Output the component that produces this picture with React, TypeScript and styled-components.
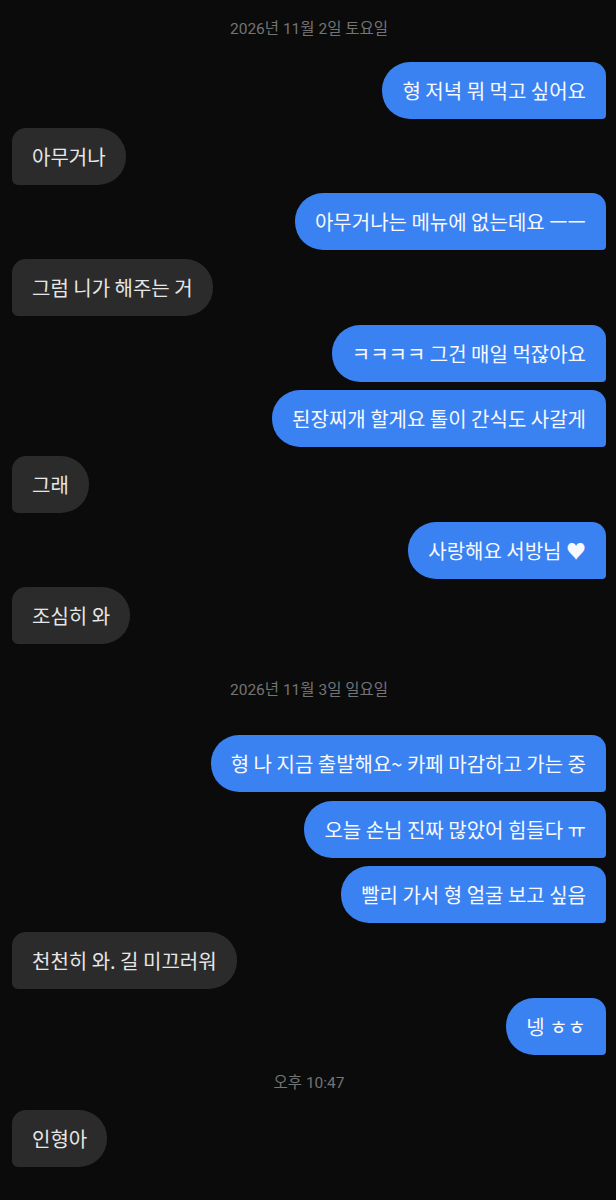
import React from 'react'
import styled, { createGlobalStyle } from 'styled-components'

type Side = 'me' | 'them'

type Item =
	| { kind: 'divider'; text: string; top: number; bottom: number }
	| { kind: 'msg'; side: Side; text: string }

const items: Item[] = [
	{ kind: 'divider', text: '2026년 11월 2일 토요일', top: 19, bottom: 14.3 },
	{ kind: 'msg', side: 'me', text: '형 저녁 뭐 먹고 싶어요' },
	{ kind: 'msg', side: 'them', text: '아무거나' },
	{ kind: 'msg', side: 'me', text: '아무거나는 메뉴에 없는데요 ㅡㅡ' },
	{ kind: 'msg', side: 'them', text: '그럼 니가 해주는 거' },
	{ kind: 'msg', side: 'me', text: 'ㅋㅋㅋㅋ 그건 매일 먹잖아요' },
	{ kind: 'msg', side: 'me', text: '된장찌개 할게요 톨이 간식도 사갈게' },
	{ kind: 'msg', side: 'them', text: '그래' },
	{ kind: 'msg', side: 'me', text: '사랑해요 서방님 ♥' },
	{ kind: 'msg', side: 'them', text: '조심히 와' },
	{ kind: 'divider', text: '2026년 11월 3일 일요일', top: 27, bottom: 26 },
	{ kind: 'msg', side: 'me', text: '형 나 지금 출발해요~ 카페 마감하고 가는 중' },
	{ kind: 'msg', side: 'me', text: '오늘 손님 진짜 많았어 힘들다 ㅠ' },
	{ kind: 'msg', side: 'me', text: '빨리 가서 형 얼굴 보고 싶음' },
	{ kind: 'msg', side: 'them', text: '천천히 와. 길 미끄러워' },
	{ kind: 'msg', side: 'me', text: '넹 ㅎㅎ' },
	{ kind: 'divider', text: '오후 10:47', top: 10, bottom: 8 },
	{ kind: 'msg', side: 'them', text: '인형아' },
]

const GlobalStyle = createGlobalStyle`
	html, body {
		margin: 0;
		padding: 0;
		background: #0b0b0b;
	}
	body {
		font-family: Roboto, "Noto Sans CJK KR", sans-serif;
	}
`

const Screen = styled.div`
	width: 616px;
	min-height: 1200px;
	box-sizing: border-box;
	background: #0b0b0b;
	padding: 0 10px 0 12px;
	display: flex;
	flex-direction: column;
	gap: 8.7px;
`

const Divider = styled.div<{ $top: number; $bottom: number }>`
	padding: ${({ $top }) => $top}px 0 ${({ $bottom }) => $bottom}px;
	height: 20px;
	line-height: 20px;
	text-align: center;
	font-size: 15.5px;
	color: #747474;
`

const Row = styled.div<{ $side: Side }>`
	display: flex;
	justify-content: ${({ $side }) => ($side === 'me' ? 'flex-end' : 'flex-start')};
`

const Bubble = styled.div<{ $side: Side }>`
	height: 57px;
	box-sizing: border-box;
	padding: 0 20px;
	display: flex;
	align-items: center;
	font-family: "Noto Sans CJK KR", Roboto, sans-serif;
	font-size: 20px;
	white-space: nowrap;
	background: ${({ $side }) => ($side === 'me' ? '#3a82f2' : '#2b2b2b')};
	color: ${({ $side }) => ($side === 'me' ? '#f7f9ff' : '#e6e6e6')};
	border-radius: ${({ $side }) =>
		$side === 'me' ? '28px 14px 4px 28px' : '14px 28px 28px 6px'};
`

export default function App() {
	return (
		<>
			<GlobalStyle />
			<Screen>
				{items.map((it, i) =>
					it.kind === 'divider' ? (
						<Divider key={i} $top={it.top} $bottom={it.bottom}>
							{it.text}
						</Divider>
					) : (
						<Row key={i} $side={it.side}>
							<Bubble $side={it.side}>{it.text}</Bubble>
						</Row>
					),
				)}
			</Screen>
		</>
	)
}
